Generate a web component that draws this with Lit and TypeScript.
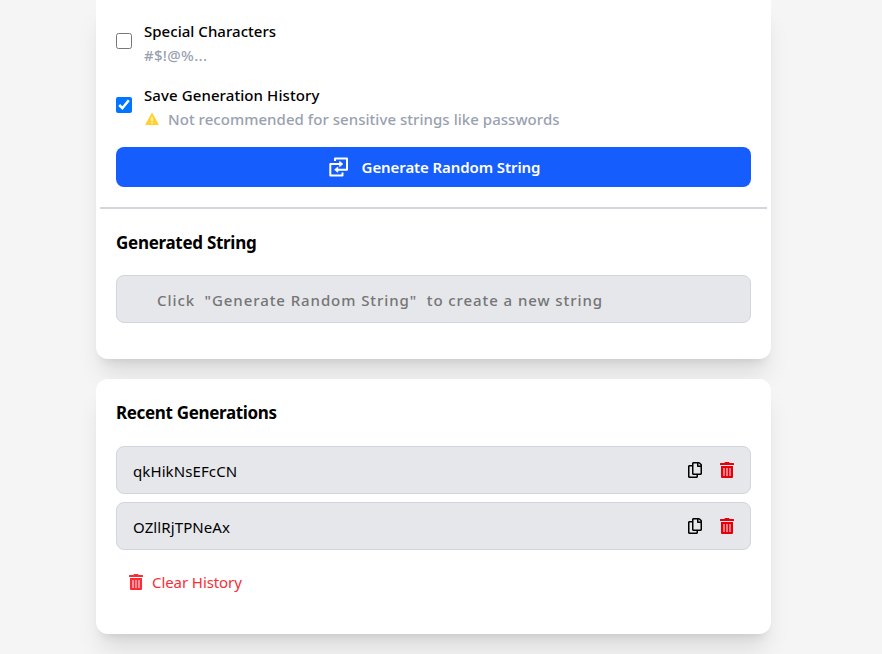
import { LitElement, html, svg, css } from "lit";
import { customElement, property, state } from "lit/decorators.js";

const trash = svg`<path d="M5 0h4l.6 1H13.6q.4 0 .4.4V3H0V1.4Q0 1 .4 1H4.4zM1 4h12v11q0 1-1 1H2q-1 0-1-1z"/><path fill="#fff" fill-opacity=".48" d="M3 6h2v8H3zM6 6h2v8H6zM9 6h2v8H9z"/>`;
const copy = svg`<path transform="scale(.03125)" d="M433.941 65.941l-51.882-51.882A48 48 0 0 0 348.118 0H176c-26.51 0-48 21.49-48 48v48H48c-26.51 0-48 21.49-48 48v320c0 26.51 21.49 48 48 48h224c26.51 0 48-21.49 48-48v-48h80c26.51 0 48-21.49 48-48V99.882a48 48 0 0 0-14.059-33.941zM266 464H54a6 6 0 0 1-6-6V150a6 6 0 0 1 6-6h74v224c0 26.51 21.49 48 48 48h96v42a6 6 0 0 1-6 6zm128-96H182a6 6 0 0 1-6-6V54a6 6 0 0 1 6-6h106v88c0 13.255 10.745 24 24 24h88v202a6 6 0 0 1-6 6zm6-256h-64V48h9.632c1.591 0 3.117.632 4.243 1.757l48.368 48.368a6 6 0 0 1 1.757 4.243V112z"/>`;

@customElement("glyph-icon")
class GlyphIcon extends LitElement {
  @property() name: "trash" | "copy" = "trash";
  static styles = css`
    :host { display: block; width: 14px; height: 16px; }
    svg { display: block; fill: currentColor; }
  `;
  render() {
    return html`<svg width="14" height="16" viewBox="0 0 14 16">${this.name === "trash" ? trash : copy}</svg>`;
  }
}

@customElement("app-root")
class AppRoot extends LitElement {
  @state() private history = ["qkHikNsEFcCN", "OZllRjTPNeAx"];

  static styles = css`
    :host {
      display: block; box-sizing: border-box; height: 654px; overflow: hidden;
      padding-left: 96px; background: #f5f5f5; color: #000;
      font: 15px/24px "Noto Sans", sans-serif;
    }
    * { box-sizing: border-box; }
    .card {
      width: 675px; background: #fff; border-radius: 12px;
      box-shadow: 0 20px 25px -5px rgb(0 0 0 / .1), 0 8px 10px -6px rgb(0 0 0 / .1);
    }
    .settings { height: 359px; border-radius: 0 0 12px 12px; padding: 19px 4px 0; }
    .recent { position: relative; height: 255px; margin-top: 20px; padding: 20px 20px 0; }
    .option { display: flex; align-items: center; gap: 12px; height: 48px; margin: 0 16px 16px; font-weight: 500; }
    .box { flex: none; width: 16px; height: 16px; margin: -4px 0 0; accent-color: #0075ff; }
    .name { display: block; white-space: nowrap; }
    .hint { display: flex; align-items: center; color: #99a1af; white-space: nowrap; }
    .warn { display: block; width: 16px; height: 16px; margin-right: 8px; }
    .special { letter-spacing: .03px; }
    .save { letter-spacing: .09px; }
    .symbols { letter-spacing: .3px; }
    .advice { letter-spacing: .04px; }
    .generate {
      display: flex; align-items: center; justify-content: center; gap: 12px;
      width: 635px; height: 40px; margin: 0 16px; padding: 0; border: 0; border-radius: 8px;
      background: #155dfc; color: #fff; font: 600 15px/24px "Noto Sans", sans-serif; letter-spacing: -.09px;
    }
    .swap { margin-left: -1px; }
    .rule { height: 2px; margin-top: 20px; background: #d1d5dc; }
    h2 { margin: 0; font: 700 17px/28px "Noto Sans", sans-serif; white-space: nowrap; }
    .made { margin: 20px 16px 18px; letter-spacing: -0.29px; }
    .past { margin-bottom: 19px; letter-spacing: -0.34px; }
    .field {
      display: flex; align-items: center; height: 48px; border: 1px solid #d1d5dc;
      border-radius: 8px; background: #e5e7eb;
    }
    .output { margin: 0 16px; padding: 2px 0 0 40px; color: #757575; font-weight: 500; letter-spacing: .92px; white-space: pre; }
    .entry { margin-bottom: 8px; padding: 0 16px; }
    .value { flex: 1; padding-top: 2px; letter-spacing: .1px; }
    .actions { display: flex; gap: 18px; }
    .remove { color: #e7000b; }
    .clear { display: flex; align-items: center; gap: 9px; margin: 20px 0 0 13px; color: #fb2c36; letter-spacing: -.08px; }
  `;

  render() {
    return html`
      <section class="card settings">
        <label class="option">
          <input class="box" type="checkbox" />
          <span><span class="name special">Special Characters</span><span class="hint symbols">#$!@%...</span></span>
        </label>
        <label class="option">
          <input class="box" type="checkbox" checked />
          <span>
            <span class="name save">Save Generation History</span>
            <span class="hint advice">
              <svg class="warn" viewBox="0 0 16 16"><path fill="#ffd230" d="M7.5 2.2a.6.6 0 0 1 1 0l6.2 11.2a.5.5 0 0 1-.5.7H1.8a.5.5 0 0 1-.5-.7z"/><path fill="#fff" d="M7.3 6.3h1.4l-.2 3.8h-1zM7.3 10.9h1.4v1.4H7.3z"/></svg>Not recommended for sensitive strings like passwords</span>
          </span>
        </label>
        <button class="generate">
          <svg class="swap" width="24" height="24" viewBox="0 0 24 24" fill="none" stroke="#fff" stroke-width="2" stroke-linejoin="round"><path d="M9 6V3.4h12v11.3H11M16.5 17.5v2.9H4.3V9H14"/><path fill="#fff" stroke-width=".8" d="M11.8 12.1v5.2l-3.2-2.6zM13.6 6.4v5.2L16.8 9z"/></svg>
          <span>Generate Random String</span>
        </button>
        <div class="rule"></div>
        <h2 class="made">Generated String</h2>
        <div class="field output">Click  "Generate Random String"  to create a new string</div>
      </section>
      <section class="card recent">
        <h2 class="past">Recent Generations</h2>
        ${this.history.map((value) => html`
          <div class="field entry">
            <span class="value">${value}</span>
            <span class="actions"><glyph-icon name="copy"></glyph-icon><glyph-icon class="remove" name="trash"></glyph-icon></span>
          </div>`)}
        <div class="clear"><glyph-icon name="trash"></glyph-icon><span>Clear History</span></div>
      </section>`;
  }
}
